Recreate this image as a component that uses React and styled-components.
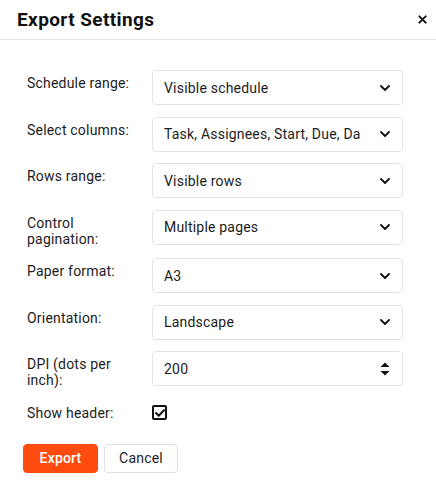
import React, { useState } from 'react'
import styled, { createGlobalStyle } from 'styled-components'

const GlobalStyle = createGlobalStyle`
    body {
        margin: 0;
        background: #fff;
        font-family: Roboto, "Liberation Sans", sans-serif;
        color: #1c1c1c;
    }
`;

const Dialog = styled.div`
    width: 436px;
    background: #fff;
`;

const Header = styled.div`
    display: flex;
    align-items: center;
    justify-content: space-between;
    height: 39px;
    padding: 0 4px 0 17px;
    border-bottom: 1px solid #e4e4e4;
`;

const Title = styled.h2`
    margin: 0;
    font-size: 19px;
    font-weight: 700;
    letter-spacing: 0.4px;
    color: #111;
    padding-bottom: 1px;
`;

const CloseBtn = styled.button`
    display: flex;
    align-items: center;
    justify-content: center;
    width: 20px;
    height: 20px;
    padding: 0;
    border: none;
    background: none;
    cursor: pointer;
`;

const Form = styled.form`
    display: grid;
    grid-template-columns: 125px 251px;
    row-gap: 11.5px;
    padding: 30px 0 0 27px;
`;

const Label = styled.label`
    padding: 5px 12px 0 0;
    font-size: 14px;
    line-height: 16px;
    letter-spacing: 0.2px;
    color: #1c1c1c;
`;

const Field = styled.div`
    position: relative;
    display: flex;
    align-items: center;
    height: 35px;
    box-sizing: border-box;
    padding: 0 42px 0 11px;
    border: 1px solid #e3e3e3;
    border-radius: 4px;
    font-size: 14px;
    letter-spacing: 0.2px;
    color: #1c1c1c;
    white-space: nowrap;
    overflow: hidden;
`;

const Value = styled.span`
    overflow: hidden;
`;

const FieldIcon = styled.span`
    position: absolute;
    right: 12px;
    top: 50%;
    transform: translateY(-50%);
    display: flex;
`;

const CheckCell = styled.div`
    display: flex;
    align-items: center;
    height: 26px;
`;

const CheckBox = styled.span`
    display: flex;
    align-items: center;
    justify-content: center;
    width: 15px;
    height: 15px;
    box-sizing: border-box;
    border: 2px solid #111;
    border-radius: 2px;
    cursor: pointer;
`;

const Actions = styled.div`
    display: flex;
    gap: 6px;
    padding: 18px 0 0 23px;
`;

const Button = styled.button`
    height: 29px;
    width: ${(props) => props.w}px;
    border-radius: 4px;
    font-family: inherit;
    font-size: 14px;
    letter-spacing: 0.2px;
    font-weight: ${(props) => (props.primary ? 500 : 400)};
    cursor: pointer;
    border: 1px solid ${(props) => (props.primary ? '#ff4b10' : '#e0e0e0')};
    background: ${(props) => (props.primary ? '#ff4b10' : '#fff')};
    color: ${(props) => (props.primary ? '#fff' : '#1c1c1c')};
`;

const Chevron = () => (
    <svg width="10" height="6" viewBox="0 0 10 6">
        <path d="M1 1l4 4 4-4" fill="none" stroke="#111" strokeWidth="1.8" strokeLinecap="round" strokeLinejoin="round" />
    </svg>
);

const Stepper = () => (
    <svg width="10" height="16" viewBox="0 0 10 16">
        <path d="M5 1.5L9.5 6H.5z" fill="#111" />
        <path d="M5 14.5L9.5 10H.5z" fill="#111" />
    </svg>
);

const rows = [
    { label: 'Schedule range:', value: 'Visible schedule' },
    { label: 'Select columns:', value: 'Task, Assignees, Start, Due, Days, Progress' },
    { label: 'Rows range:', value: 'Visible rows' },
    { label: 'Control pagination:', value: 'Multiple pages' },
    { label: 'Paper format:', value: 'A3' },
    { label: 'Orientation:', value: 'Landscape' },
];

const App = () => {
    const [showHeader, setShowHeader] = useState(true);

    return (
        <Dialog>
            <GlobalStyle />
            <Header>
                <Title>Export Settings</Title>
                <CloseBtn type="button" aria-label="Close">
                    <svg width="9" height="9" viewBox="0 0 10 10">
                        <path d="M1.5 1.5l7 7M8.5 1.5l-7 7" stroke="#111" strokeWidth="2.2" strokeLinecap="round" />
                    </svg>
                </CloseBtn>
            </Header>
            <Form onSubmit={(e) => e.preventDefault()}>
                {rows.map((row) => (
                    <React.Fragment key={row.label}>
                        <Label>{row.label}</Label>
                        <Field>
                            <Value>{row.value}</Value>
                            <FieldIcon><Chevron /></FieldIcon>
                        </Field>
                    </React.Fragment>
                ))}
                <Label>DPI (dots per inch):</Label>
                <Field>
                    <Value>200</Value>
                    <FieldIcon><Stepper /></FieldIcon>
                </Field>
                <Label>Show header:</Label>
                <CheckCell>
                    <CheckBox onClick={() => setShowHeader(!showHeader)}>
                        {showHeader ? (
                            <svg width="10" height="8" viewBox="0 0 10 8">
                                <path d="M1 4l2.7 2.7L9 1.3" fill="none" stroke="#111" strokeWidth="2" strokeLinecap="round" strokeLinejoin="round" />
                            </svg>
                        ) : null}
                    </CheckBox>
                </CheckCell>
            </Form>
            <Actions>
                <Button type="button" primary w={75}>Export</Button>
                <Button type="button" w={74}>Cancel</Button>
            </Actions>
        </Dialog>
    );
}

export default App;
